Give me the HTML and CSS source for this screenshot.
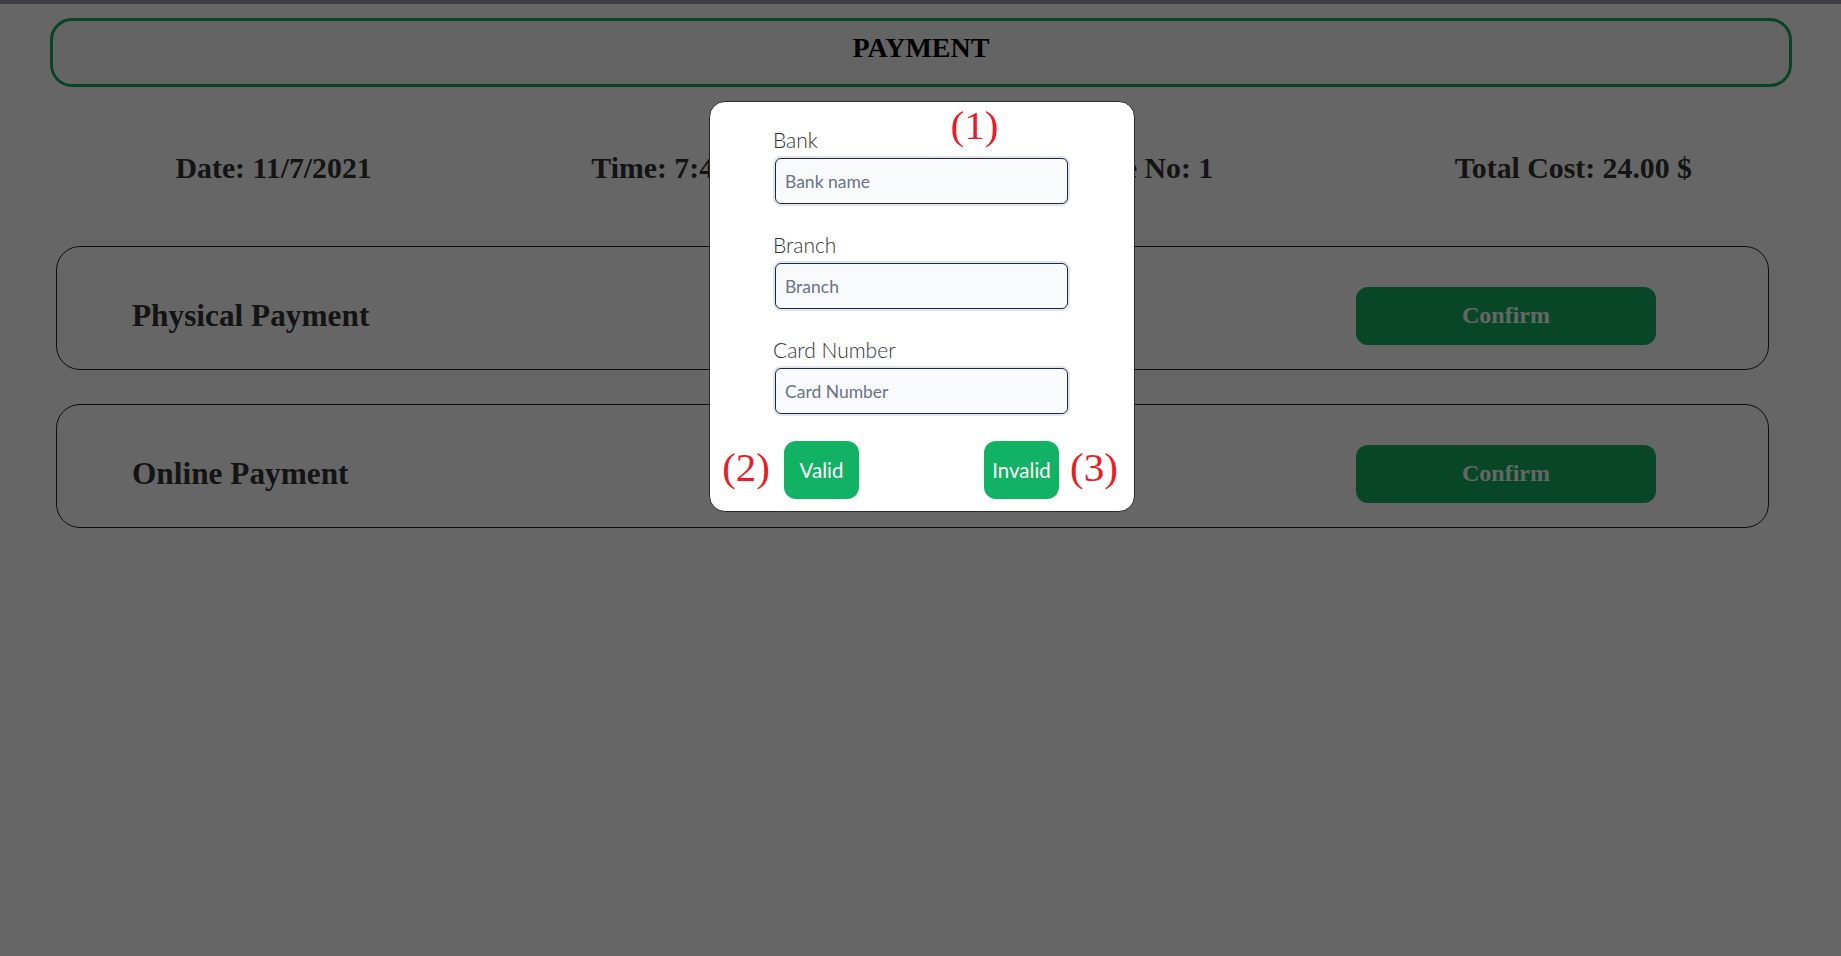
FILE: index.html
```html
<!DOCTYPE html>
<html lang="en">
<head>
<meta charset="utf-8">
<title>Payment</title>
<link rel="stylesheet" href="styles.css">
</head>
<body>
  <div class="topbar"></div>
  <header class="title-box"><h1 class="title">PAYMENT</h1></header>

  <div class="info-row">
    <div class="info-item">Date: 11/7/2021</div>
    <div class="info-item">Time: 7:45:23 PM</div>
    <div class="info-item">Table No: 1</div>
    <div class="info-item">Total Cost: 24.00 $</div>
  </div>

  <section class="option-card">
    <h2 class="option-title">Physical Payment</h2>
    <button class="confirm-btn" type="button">Confirm</button>
  </section>

  <section class="option-card">
    <h2 class="option-title">Online Payment</h2>
    <button class="confirm-btn" type="button">Confirm</button>
  </section>

  <div class="backdrop"></div>

  <div class="modal-layer">
    <div class="modal">
      <span class="note note-1">(1)</span>
      <form class="card-form">
        <label class="field-label" for="bank">Bank</label>
        <input class="field-input" id="bank" type="text" placeholder="Bank name">

        <label class="field-label" for="branch">Branch</label>
        <input class="field-input" id="branch" type="text" placeholder="Branch">

        <label class="field-label" for="card">Card Number</label>
        <input class="field-input" id="card" type="text" placeholder="Card Number">

        <div class="actions">
          <button class="act-btn" type="button">Valid<span class="note note-left">(2)</span></button>
          <button class="act-btn" type="button">Invalid<span class="note note-right">(3)</span></button>
        </div>
      </form>
    </div>
  </div>
</body>
</html>
```

FILE: styles.css
```css
* {
  box-sizing: border-box;
}

html, body {
  margin: 0;
  padding: 0;
  background: #ffffff;
  height: 100%;
}

body {
  font-family: "Liberation Serif", "Times New Roman", serif;
  color: #333333;
}

.topbar {
  height: 4px;
  background: #989ba5;
}

.title-box {
  margin: 14px 49px 0 50px;
  height: 69px;
  border: 3px solid #14ad64;
  border-radius: 22px;
  background: #f7f9f7;
  padding-top: 11px;
}

.title {
  margin: 0;
  text-align: center;
  font-size: 28px;
  line-height: 32px;
  font-weight: 700;
  color: #000000;
}

.info-row {
  margin: 64px 51px 0 57px;
  display: grid;
  grid-template-columns: repeat(4, 1fr);
}

.info-item {
  text-align: center;
  font-size: 29.8px;
  line-height: 34px;
  font-weight: 700;
  color: #333333;
  white-space: nowrap;
}

.option-card {
  margin: 61px 0 0 56px;
  width: 1713px;
  height: 124px;
  border: 1px solid #222222;
  border-radius: 24px;
  display: flex;
  align-items: center;
  justify-content: space-between;
  padding: 20px 112px 5px 75px;
}

.option-card + .option-card {
  margin-top: 34px;
}

.option-title {
  margin: 0;
  font-size: 31.3px;
  font-weight: 700;
  color: #333333;
}

.confirm-btn {
  width: 300px;
  height: 58px;
  border: none;
  border-radius: 12px;
  background: #12b264;
  color: #ffffff;
  font-family: "Liberation Serif", "Times New Roman", serif;
  font-size: 24px;
  font-weight: 700;
}

.backdrop {
  position: fixed;
  inset: 0;
  background: rgba(0, 0, 0, 0.6);
}

.modal-layer {
  position: fixed;
  inset: 0;
  display: flex;
  justify-content: center;
  align-items: flex-start;
  padding-top: 101px;
  padding-left: 2px;
}

.modal {
  position: relative;
  width: 426px;
  height: 411px;
  background: #ffffff;
  border: 1px solid #2b2b2b;
  border-radius: 16px;
  padding: 26px 0 12px;
  font-family: Lato, "Noto Sans", sans-serif;
}

.card-form {
  width: 297px;
  margin: 0 auto;
  display: flex;
  flex-direction: column;
}

.field-label {
  font-size: 21px;
  line-height: 24px;
  font-weight: 300;
  color: #333333;
  margin-bottom: 6px;
}

.field-input {
  width: 293px;
  height: 46px;
  margin: 0 2px 29px;
  border: 1px solid #1d2947;
  border-radius: 6px;
  background: #f8fafc;
  box-shadow: 0 0 0 2px #e4e6ec;
  padding: 0 9px;
  font-family: Lato, "Noto Sans", sans-serif;
  font-size: 17.5px;
  color: #333333;
  outline: none;
}

.field-input:last-of-type {
  margin-bottom: 27px;
}

.field-input::placeholder {
  color: #6b7385;
  opacity: 1;
}

.actions {
  display: flex;
  justify-content: space-between;
  padding: 0 11px;
}

.act-btn {
  position: relative;
  width: 75px;
  height: 58px;
  padding: 0;
  border: none;
  border-radius: 12px;
  background: #12b264;
  color: #ffffff;
  font-family: Lato, "Noto Sans", sans-serif;
  font-size: 20.5px;
  font-weight: 400;
}

.note {
  position: absolute;
  font-family: "Liberation Serif", "Times New Roman", serif;
  font-size: 41px;
  line-height: 40px;
  font-weight: 400;
  color: #ec1c24;
  white-space: nowrap;
}

.note-1 {
  top: 3px;
  left: 241px;
}

.note-left {
  top: 6px;
  right: calc(100% + 14px);
}

.note-right {
  top: 6px;
  left: calc(100% + 11px);
}
```
